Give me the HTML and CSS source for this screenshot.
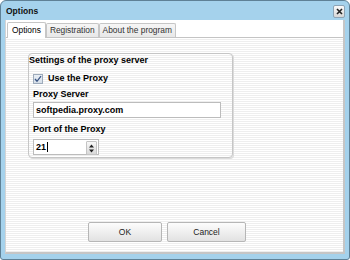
FILE: index.html
```html
<!DOCTYPE html>
<html lang="en">
<head>
    <meta charset="UTF-8">
    <title>Options</title>
    <link rel="stylesheet" href="styles.css">
</head>
<body>
    <div class="window">
        <div class="titlebar">
            <span class="title">Options</span>
            <button class="close">
                <svg width="7" height="7" viewBox="0 0 7 7"><path d="M1 1L6 6M6 1L1 6" stroke="#222" stroke-width="1.6"/></svg>
            </button>
        </div>
        <div class="client">
            <div class="tabs">
                <div class="tab active">Options</div>
                <div class="tab">Registration</div>
                <div class="tab">About the program</div>
            </div>
            <div class="panel">
                <div class="group">
                    <div class="group-title">Settings of the proxy server</div>
                    <label class="check">
                        <span class="box">
                            <svg width="8" height="8" viewBox="0 0 8 8"><path d="M1 4L3 6.3L7 1.2" stroke="#3b5584" stroke-width="1.3" fill="none"/></svg>
                        </span>
                        Use the Proxy
                    </label>
                    <div class="label">Proxy Server</div>
                    <div class="input wide">softpedia.proxy.com</div>
                    <div class="label label-port">Port of the Proxy</div>
                    <div class="input spin">
                        <span>21<i class="caret"></i></span>
                        <span class="spin-btn">
                            <svg width="7" height="11" viewBox="0 0 7 11"><path d="M3.5 1.5L6 4.5H1Z M3.5 9.5L6 6.5H1Z" fill="#222"/></svg>
                        </span>
                    </div>
                </div>
                <div class="buttons">
                    <button class="btn">OK</button>
                    <button class="btn btn-cancel">Cancel</button>
                </div>
            </div>
        </div>
    </div>
</body>
</html>
```

FILE: styles.css
```css
body {
    margin: 0;
    font-family: "Liberation Sans", Arial, sans-serif;
    font-size: 9px;
    color: #000;
}

.window {
    width: 350px;
    height: 260px;
    box-sizing: border-box;
    background: #a5d2ec;
    border: 1px solid #5f8196;
    border-radius: 6px 6px 3px 3px;
    display: flex;
    flex-direction: column;
}

.titlebar {
    height: 19px;
    display: flex;
    align-items: flex-start;
    justify-content: space-between;
    padding: 0 4px 0 5px;
}

.title {
    font-weight: bold;
    font-size: 8.5px;
    line-height: 11px;
    margin-top: 5px;
    color: #111;
}

.close {
    width: 12px;
    height: 13px;
    padding: 0;
    margin-top: 4px;
    border: 1px solid #8da4b6;
    border-radius: 2px;
    background: linear-gradient(#fafafa, #d6d6d6);
    display: flex;
    align-items: center;
    justify-content: center;
}

.client {
    flex: 1;
    margin: 0 4px 5px 4px;
    border-left: 1px solid #d4d4d4;
    border-right: 2px solid #c6c6c6;
    border-bottom: 2px solid #c6c6c6;
    background: repeating-linear-gradient(#ffffff 0, #ffffff 1px, #eeeeee 1px, #eeeeee 2px);
    display: flex;
    flex-direction: column;
}

.tabs {
    display: flex;
    align-items: flex-end;
    height: 16px;
    padding: 1px 0 0 1px;
    border-bottom: 1px solid #c4c4c4;
    background: #fff;
}

.tab {
    height: 13px;
    line-height: 13px;
    font-size: 8.4px;
    color: #333;
    padding: 0 3px;
    border: 1px solid #c6c6c6;
    border-bottom: none;
    border-radius: 2px 2px 0 0;
    background: linear-gradient(#f6f6f6, #e8e8e8);
}

.tab.active {
    height: 15px;
    line-height: 15px;
    color: #000;
    background: #fff;
    padding: 0 4px;
    margin-bottom: -1px;
    z-index: 1;
}

.panel {
    flex: 1;
    display: flex;
    flex-direction: column;
    padding: 15px 0 0 22px;
}

.group {
    width: 203px;
    height: 103px;
    border: 1px solid #c6c6c6;
    border-radius: 4px;
    box-shadow: 1px 1px 0 #dcdcdc;
    font-weight: bold;
    line-height: 11px;
}

.group-title {
    margin-top: 1px;
}

.check {
    display: flex;
    align-items: center;
    gap: 5px;
    margin: 7px 0 0 4px;
    height: 11px;
}

.box {
    width: 10px;
    height: 10px;
    box-sizing: border-box;
    border: 1px solid #9eabbb;
    background: linear-gradient(#e8eef5, #d6dfe9);
    display: flex;
    align-items: center;
    justify-content: center;
}

.label {
    margin: 5px 0 0 4px;
}

.label-port {
    margin-top: 6px;
}

.input {
    height: 16px;
    box-sizing: border-box;
    border: 1px solid #bcbcbc;
    background: #fff;
    padding: 0 2px;
    margin: 2px 0 0 4px;
    line-height: 14px;
}

.wide {
    width: 188px;
}

.spin {
    width: 66px;
    display: flex;
    justify-content: space-between;
    margin-top: 4px;
    padding-right: 0;
}

.caret {
    display: inline-block;
    width: 1px;
    height: 10px;
    background: #000;
    vertical-align: -2px;
    margin-left: 1px;
}

.spin-btn {
    width: 9px;
    height: 12px;
    margin: 1px 1px 0 0;
    border: 1px solid #c4c4c4;
    border-radius: 1px;
    background: linear-gradient(#f8f8f8, #d8d8d8);
    display: flex;
    align-items: center;
    justify-content: center;
}

.buttons {
    margin: auto 0 10px 60px;
    display: flex;
    gap: 5px;
}

.btn {
    width: 74px;
    height: 20px;
    padding: 0;
    font-family: "Liberation Sans", Arial, sans-serif;
    font-size: 8.5px;
    color: #222;
    border: 1px solid #b6b6b6;
    border-radius: 2px;
    background: linear-gradient(#fdfdfd, #e2e2e2);
}

.btn-cancel {
    width: 79px;
}
```
